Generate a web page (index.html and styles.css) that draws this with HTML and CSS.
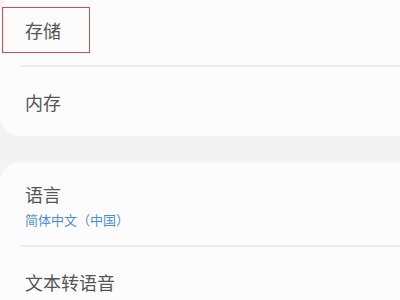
FILE: index.html
```html
<!DOCTYPE html>
<html>
	<head>
		<meta charset="UTF-8">
		<title>设置</title>
	<link rel="stylesheet" href="styles.css">
	</head>
	<body>
		<div class="page">
			<div class="card first">
				<div class="row top">
					<span class="title">存储</span>
				</div>
				<div class="line"></div>
				<div class="row">
					<span class="title">内存</span>
				</div>
			</div>
			<div class="card second">
				<div class="row double">
					<span class="title">语言</span>
					<span class="sub">简体中文（中国）</span>
				</div>
				<div class="line"></div>
				<div class="row">
					<span class="title">文本转语音</span>
				</div>
			</div>
			<div class="mark"></div>
		</div>
	</body>
</html>
```

FILE: styles.css
```css
*{
	margin: 0;
	padding: 0;
}
html,body{
	width: 400px;
	height: 300px;
	overflow: hidden;
	background-color: #f3f3f3;
}
.page{
	position: relative;
	display: flow-root;
	font-family: "Noto Sans CJK SC", "Noto Sans", sans-serif;
}
.card{
	background-color: #fcfcfc;
	border-radius: 20px 0 0 20px;
	margin-right: -20px;
}
.first{
	margin-top: -5px;
}
.second{
	margin-top: 26px;
}
.row{
	height: 69px;
	display: flex;
	flex-direction: column;
	justify-content: center;
	padding-left: 25px;
}
.row.top{
	height: 70px;
}
.row.double{
	height: auto;
	padding-top: 20px;
	padding-bottom: 17px;
}
.title{
	font-size: 18px;
	line-height: 24px;
	color: #555;
}
.sub{
	margin-top: 5px;
	font-size: 13px;
	line-height: 17px;
	color: #4a8fd8;
}
.line{
	height: 2px;
	margin-left: 20px;
	background-color: #ececec;
}
.mark{
	position: absolute;
	left: 2px;
	top: 7px;
	width: 86px;
	height: 44px;
	border: 1px solid #d04a58;
}
```
